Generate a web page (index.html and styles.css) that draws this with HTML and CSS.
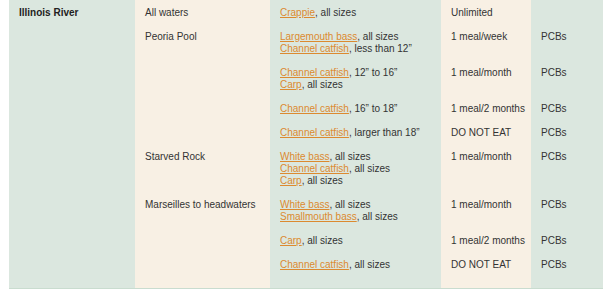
FILE: index.html
```html
<!DOCTYPE html>
<html lang="en">
<head>
<meta charset="utf-8">
<title>Illinois River fish advisory</title>
<link rel="stylesheet" href="styles.css">
</head>
<body>
<div class="wrap">
<table class="advisory">
  <colgroup>
    <col class="c-water">
    <col class="c-loc">
    <col class="c-species">
    <col class="c-meals">
    <col class="c-contam">
  </colgroup>
  <tbody>
    <tr>
      <th class="water" rowspan="9">Illinois River</th>
      <td class="loc">All waters</td>
      <td class="species"><a href="#">Crappie</a>, all sizes</td>
      <td class="meals">Unlimited</td>
      <td class="contam"></td>
    </tr>
    <tr>
      <td class="loc" rowspan="4">Peoria Pool</td>
      <td class="species"><a href="#">Largemouth bass</a>, all sizes<br><a href="#">Channel catfish</a>, less than 12”</td>
      <td class="meals">1 meal/week</td>
      <td class="contam">PCBs</td>
    </tr>
    <tr>
      <td class="species"><a href="#">Channel catfish</a>, 12” to 16”<br><a href="#">Carp</a>, all sizes</td>
      <td class="meals">1 meal/month</td>
      <td class="contam">PCBs</td>
    </tr>
    <tr>
      <td class="species"><a href="#">Channel catfish</a>, 16” to 18”</td>
      <td class="meals">1 meal/2 months</td>
      <td class="contam">PCBs</td>
    </tr>
    <tr>
      <td class="species"><a href="#">Channel catfish</a>, larger than 18”</td>
      <td class="meals">DO NOT EAT</td>
      <td class="contam">PCBs</td>
    </tr>
    <tr>
      <td class="loc">Starved Rock</td>
      <td class="species"><a href="#">White bass</a>, all sizes<br><a href="#">Channel catfish</a>, all sizes<br><a href="#">Carp</a>, all sizes</td>
      <td class="meals">1 meal/month</td>
      <td class="contam">PCBs</td>
    </tr>
    <tr>
      <td class="loc" rowspan="3">Marseilles to headwaters</td>
      <td class="species"><a href="#">White bass</a>, all sizes<br><a href="#">Smallmouth bass</a>, all sizes</td>
      <td class="meals">1 meal/month</td>
      <td class="contam">PCBs</td>
    </tr>
    <tr>
      <td class="species"><a href="#">Carp</a>, all sizes</td>
      <td class="meals">1 meal/2 months</td>
      <td class="contam">PCBs</td>
    </tr>
    <tr class="last">
      <td class="species"><a href="#">Channel catfish</a>, all sizes</td>
      <td class="meals">DO NOT EAT</td>
      <td class="contam">PCBs</td>
    </tr>
  </tbody>
</table>
</div>
</body>
</html>
```
FILE: styles.css
```css
html, body {
  margin: 0;
  padding: 0;
  background: #ffffff;
}

.wrap {
  padding: 0 9px;
}

.advisory {
  width: 594px;
  border-collapse: collapse;
  table-layout: fixed;
  font-family: "Liberation Sans", Arial, sans-serif;
  font-size: 10px;
  line-height: 12px;
  color: #333333;
  border-bottom: 1px solid #c9dccf;
}

.c-water { width: 126px; background: #dbe7df; }
.c-loc { width: 135px; background: #f8f0e4; }
.c-species { width: 171px; background: #dbe7df; }
.c-meals { width: 90px; background: #f8f0e4; }
.c-contam { width: 72px; background: #dbe7df; }

.advisory th,
.advisory td {
  padding: 7px 4px 5px 10px;
  vertical-align: top;
  text-align: left;
  white-space: nowrap;
}

.advisory th {
  font-weight: bold;
  color: #222222;
}

.advisory .last td {
  padding-bottom: 17px;
}

.advisory a {
  color: #dc8a30;
  text-decoration: underline;
}
```
